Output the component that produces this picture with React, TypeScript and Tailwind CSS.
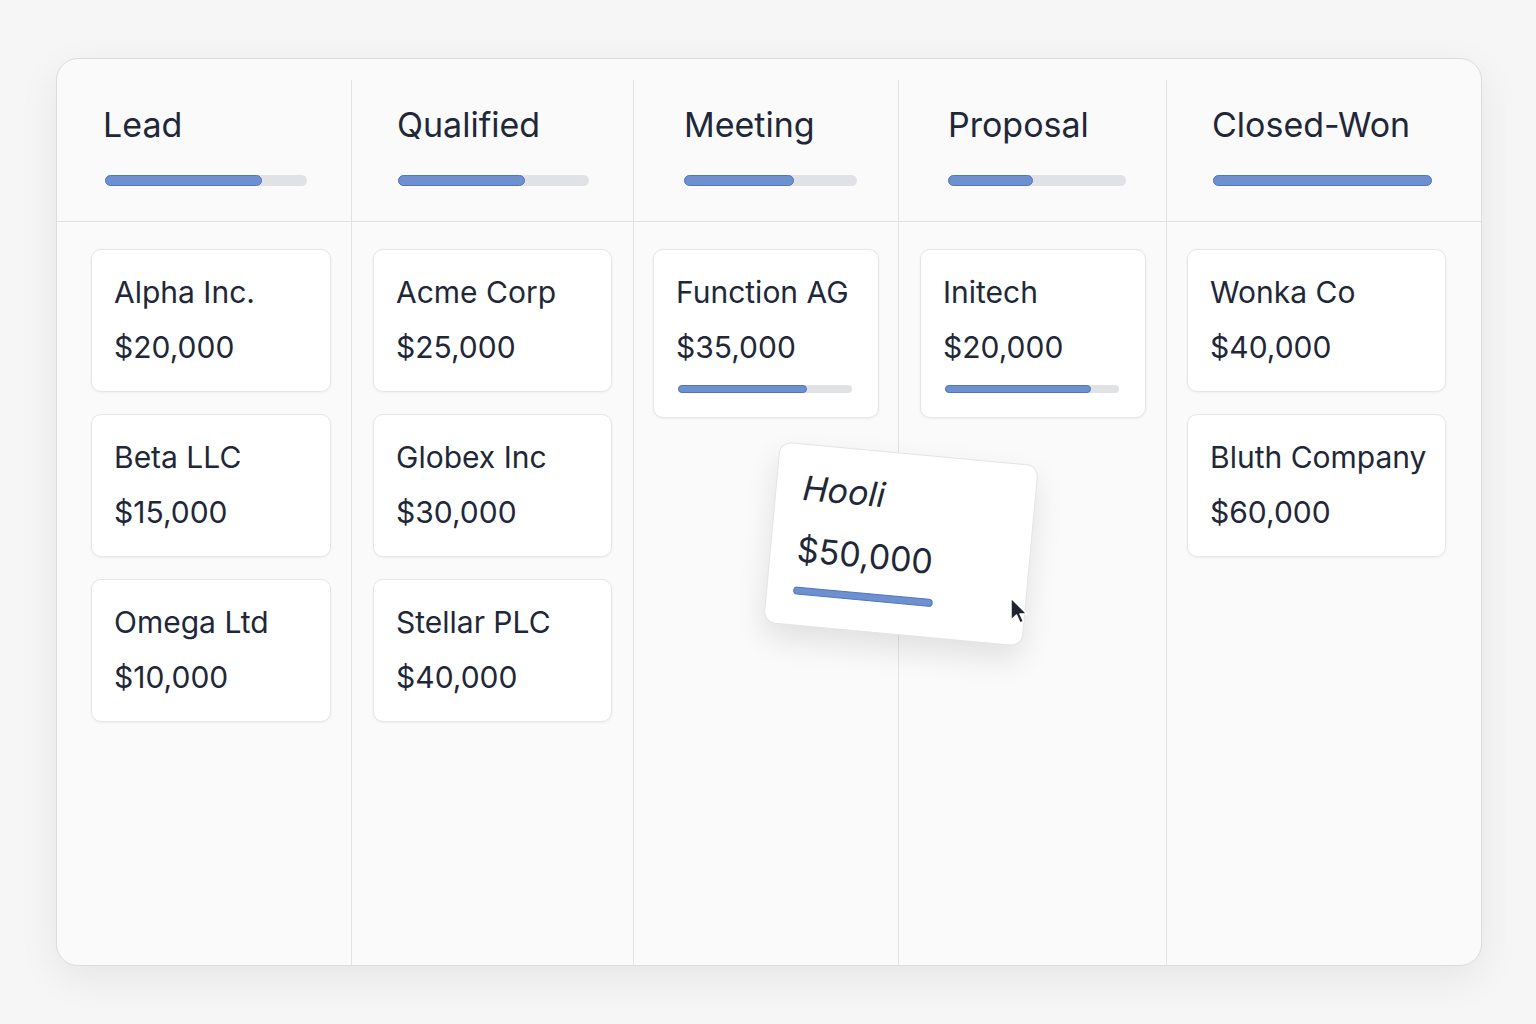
import React from "react";

type Deal = { name: string; amount: string; bar?: number };

function Bar({ fill, track, h, full }: { fill: number; track: number; h: string; full?: boolean }) {
  return (
    <div className={`relative rounded-full bg-[#e1e2e6] ${h}`} style={{ width: track }}>
      <div
        className="absolute left-0 top-0 h-full rounded-full bg-[#6e90cf] border border-[#4f76c2]"
        style={{ width: full ? track : fill }}
      />
    </div>
  );
}

function Card({ d }: { d: Deal }) {
  return (
    <div className={`bg-white rounded-[10px] border border-[#e6e6e8] shadow-[0_1px_3px_rgba(0,0,0,0.05)] pl-[22px] pt-[24px] ${d.bar !== undefined ? "pb-[24px]" : "pb-[26px]"}`}>
      <div className="text-[30px] leading-[36px] text-[#1e2838]">{d.name}</div>
      <div className="mt-[19px] text-[30px] leading-[36px] text-[#1e2838]">{d.amount}</div>
      {d.bar !== undefined && (
        <div className="mt-[20px] ml-[2px]">
          <Bar fill={d.bar} track={174} h="h-[8px]" />
        </div>
      )}
    </div>
  );
}

export default function App() {
  const font = { fontFamily: "Inter, 'Noto Sans', sans-serif" };
  return (
    <div className="w-[1536px] h-[1024px] bg-[#f6f6f6] pt-[58px] pl-[56px]" style={font}>
      <div className="relative w-[1426px] h-[908px] rounded-[22px] border border-[#dcdcdc] bg-[#fafafa] shadow-[0_12px_40px_rgba(0,0,0,0.07)] pt-[21px]">
        <div className="flex h-full">
          {/* Lead */}
          <div className="w-[294px] flex flex-col">
            <div className="h-[142px] border-b border-[#e2e2e2] pl-[46px] pt-[25px]">
              <div className="text-[34px] leading-[40px] text-[#1e2838]">Lead</div>
              <div className="mt-[30px] ml-[2px]"><Bar fill={157} track={202} h="h-[11px]" /></div>
            </div>
            <div className="flex flex-col gap-[22px] pt-[27px] pl-[34px] pr-[20px]">
              <Card d={{ name: "Alpha Inc.", amount: "$20,000" }} />
              <Card d={{ name: "Beta LLC", amount: "$15,000" }} />
              <Card d={{ name: "Omega Ltd", amount: "$10,000" }} />
            </div>
          </div>
          {/* Qualified */}
          <div className="w-[282px] flex flex-col border-l border-[#e2e2e2]">
            <div className="h-[142px] border-b border-[#e2e2e2] pl-[45px] pt-[25px]">
              <div className="text-[34px] leading-[40px] text-[#1e2838]">Qualified</div>
              <div className="mt-[30px] ml-[1px]"><Bar fill={127} track={191} h="h-[11px]" /></div>
            </div>
            <div className="flex flex-col gap-[22px] pt-[27px] pl-[21px] pr-[21px]">
              <Card d={{ name: "Acme Corp", amount: "$25,000" }} />
              <Card d={{ name: "Globex Inc", amount: "$30,000" }} />
              <Card d={{ name: "Stellar PLC", amount: "$40,000" }} />
            </div>
          </div>
          {/* Meeting */}
          <div className="w-[265px] flex flex-col border-l border-[#e2e2e2]">
            <div className="h-[142px] border-b border-[#e2e2e2] pl-[50px] pt-[25px]">
              <div className="text-[34px] leading-[40px] text-[#1e2838]">Meeting</div>
              <div className="mt-[30px]"><Bar fill={110} track={173} h="h-[11px]" /></div>
            </div>
            <div className="flex flex-col gap-[22px] pt-[27px] pl-[19px] pr-[19px]">
              <Card d={{ name: "Function AG", amount: "$35,000", bar: 129 }} />
            </div>
          </div>
          {/* Proposal */}
          <div className="w-[268px] flex flex-col border-l border-[#e2e2e2]">
            <div className="h-[142px] border-b border-[#e2e2e2] pl-[49px] pt-[25px]">
              <div className="text-[34px] leading-[40px] text-[#1e2838]">Proposal</div>
              <div className="mt-[30px]"><Bar fill={85} track={178} h="h-[11px]" /></div>
            </div>
            <div className="flex flex-col gap-[22px] pt-[27px] pl-[21px] pr-[20px]">
              <Card d={{ name: "Initech", amount: "$20,000", bar: 146 }} />
            </div>
          </div>
          {/* Closed-Won */}
          <div className="flex-1 flex flex-col border-l border-[#e2e2e2]">
            <div className="h-[142px] border-b border-[#e2e2e2] pl-[45px] pt-[25px]">
              <div className="text-[34px] leading-[40px] text-[#1e2838]">Closed-Won</div>
              <div className="mt-[30px] ml-[1px]"><Bar fill={219} track={219} h="h-[11px]" full /></div>
            </div>
            <div className="flex flex-col gap-[22px] pt-[27px] pl-[20px] pr-[35px]">
              <Card d={{ name: "Wonka Co", amount: "$40,000" }} />
              <Card d={{ name: "Bluth Company", amount: "$60,000" }} />
            </div>
          </div>
        </div>

        {/* Dragged card */}
        <div className="absolute left-[714px] top-[394px] w-[260px] h-[182px] rotate-[5.3deg] bg-white rounded-[12px] border border-[#e4e4e6] shadow-[0_14px_30px_rgba(0,0,0,0.10)] pl-[26px] pt-[22px]">
          <div className="text-[34px] leading-[42px] text-[#1e2838] italic">Hooli</div>
          <div className="mt-[20px] text-[34px] leading-[42px] text-[#1e2838]">$50,000</div>
          <div className="mt-[16px] w-[140px] h-[8px] rounded-full bg-[#6e90cf] border border-[#4f76c2]" />
        </div>

        {/* Cursor */}
        <svg className="absolute left-[952px] top-[537px]" width="22" height="30" viewBox="0 0 22 30">
          <path d="M2 2 L2 24 L7.5 19 L11 27 L14.5 25.5 L11 18 L18 18 Z" fill="#1f2430" stroke="#ffffff" strokeWidth="1.5" strokeLinejoin="round" />
        </svg>
      </div>
    </div>
  );
}
